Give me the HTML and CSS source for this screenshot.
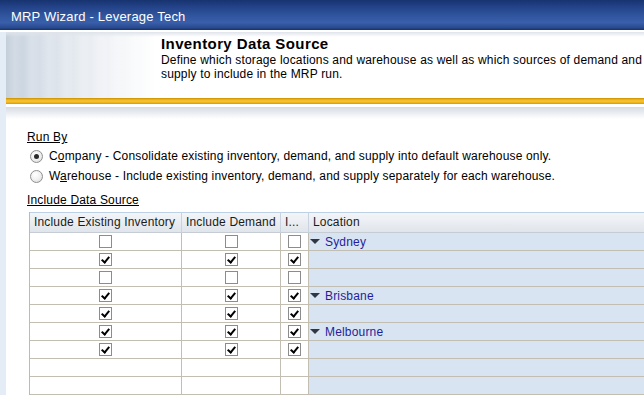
FILE: index.html
```html
<!DOCTYPE html>
<html lang="en">
<head>
    <meta charset="UTF-8" />
    <meta name="viewport" content="width=device-width,initial-scale=1.0" />
    <title>MRP Wizard - Leverage Tech</title>
    <link rel="stylesheet" href="styles.css">
</head>
<body>

    <div class="titlebar">MRP Wizard - Leverage Tech</div>

    <div class="frame">
        <div class="strip"></div>
        <div class="main">
            <div class="banner">
                <div class="banner-text">
                    <h1>Inventory Data Source</h1>
                    <p>Define which storage locations and warehouse as well as which sources of demand and<br>supply to include in the MRP run.</p>
                </div>
            </div>
            <div class="band"></div>
            <div class="shade"></div>

            <div class="content">
                <div class="label">Run By</div>
                <div class="radios">
                    <div class="radio-row">
                        <span class="radio checked"></span>
                        <span>C<u>o</u>mpany - Consolidate existing inventory, demand, and supply into default warehouse only.</span>
                    </div>
                    <div class="radio-row">
                        <span class="radio"></span>
                        <span>W<u>a</u>rehouse - Include existing inventory, demand, and supply separately for each warehouse.</span>
                    </div>
                </div>

                <div class="label second">Include Data Source</div>

                <div class="grid">
                    <div class="head">Include Existing Inventory</div>
                    <div class="head">Include Demand</div>
                    <div class="head">I...</div>
                    <div class="head">Location</div>

                    <div class="cell"><span class="chk"></span></div>
                    <div class="cell"><span class="chk"></span></div>
                    <div class="cell"><span class="chk"></span></div>
                    <div class="cell loc"><span class="arrow"></span>Sydney</div>

                    <div class="cell"><span class="chk on"></span></div>
                    <div class="cell"><span class="chk on"></span></div>
                    <div class="cell"><span class="chk on"></span></div>
                    <div class="cell loc"></div>

                    <div class="cell"><span class="chk"></span></div>
                    <div class="cell"><span class="chk"></span></div>
                    <div class="cell"><span class="chk"></span></div>
                    <div class="cell loc"></div>

                    <div class="cell"><span class="chk on"></span></div>
                    <div class="cell"><span class="chk on"></span></div>
                    <div class="cell"><span class="chk on"></span></div>
                    <div class="cell loc"><span class="arrow"></span>Brisbane</div>

                    <div class="cell"><span class="chk on"></span></div>
                    <div class="cell"><span class="chk on"></span></div>
                    <div class="cell"><span class="chk on"></span></div>
                    <div class="cell loc"></div>

                    <div class="cell"><span class="chk on"></span></div>
                    <div class="cell"><span class="chk on"></span></div>
                    <div class="cell"><span class="chk on"></span></div>
                    <div class="cell loc"><span class="arrow"></span>Melbourne</div>

                    <div class="cell"><span class="chk on"></span></div>
                    <div class="cell"><span class="chk on"></span></div>
                    <div class="cell"><span class="chk on"></span></div>
                    <div class="cell loc"></div>

                    <div class="cell"></div>
                    <div class="cell"></div>
                    <div class="cell"></div>
                    <div class="cell loc"></div>

                    <div class="cell"></div>
                    <div class="cell"></div>
                    <div class="cell"></div>
                    <div class="cell loc"></div>
                </div>
            </div>
        </div>
    </div>

</body>
</html>
```

FILE: styles.css
```css
body {
    margin: 0;
    width: 644px;
    height: 395px;
    overflow: hidden;
    background: #fff;
    font-family: "Liberation Sans", Arial, sans-serif;
    font-size: 12px;
    letter-spacing: 0.17px;
    color: #000;
}

.titlebar {
    height: 30px;
    box-sizing: border-box;
    padding: 3px 0 0 11px;
    line-height: 27px;
    font-size: 13px;
    letter-spacing: 0.2px;
    color: #fff;
    background: linear-gradient(#17336f 0, #24448a 25%, #3459a3 60%, #3a5faa 75%, #284a90 92%, #16326c 100%);
}

.frame {
    display: flex;
    height: 365px;
}

.strip {
    width: 6px;
    background: #e4ecf5;
    border-top: 2px solid #fff;
}

.main {
    flex: 1;
    border-top: 2px solid #fff;
    overflow: hidden;
}

.banner {
    height: 66px;
    box-sizing: border-box;
    padding: 3px 0 0 155px;
    background:
        linear-gradient(#dfe4eb 0, rgba(255,255,255,0) 5px),
        repeating-linear-gradient(90deg, rgba(255,255,255,0) 0, rgba(255,255,255,0.18) 9px, rgba(255,255,255,0) 17px),
        linear-gradient(90deg, #c4cfdc 0, #d9e0e9 40px, #eef1f5 95px, #fff 150px);
}

.banner h1 {
    margin: 0;
    font-size: 15px;
    letter-spacing: 0.4px;
    line-height: 18px;
    font-weight: bold;
}

.banner p {
    margin: 0;
    line-height: 14px;
    white-space: nowrap;
}

.band {
    height: 6px;
    background: linear-gradient(#c58d00 0, #e8aa10 20%, #f6c63c 50%, #eeb41c 75%, #d89b00 100%);
}

.shade {
    margin-top: 3px;
    height: 12px;
    background: linear-gradient(#d6dce4, #fff);
}

.content {
    padding: 11px 0 0 21px;
}

.label {
    line-height: 14px;
    text-decoration: underline;
}

.label.second {
    margin-top: 7px;
}

.radios {
    margin-top: 2px;
}

.radio-row {
    height: 20px;
    display: flex;
    align-items: center;
    gap: 6px;
    padding-left: 3px;
    white-space: nowrap;
}

.radio {
    width: 13px;
    height: 13px;
    box-sizing: border-box;
    border: 1px solid #8d8f91;
    border-radius: 50%;
    background: radial-gradient(circle at 40% 35%, #fff 0, #f0f0f0 50%, #d4d4d4 100%);
    display: flex;
    align-items: center;
    justify-content: center;
}

.radio.checked::after {
    content: "";
    width: 5px;
    height: 5px;
    border-radius: 50%;
    background: #2b2b2b;
}

.grid {
    margin-top: 5px;
    margin-left: 2px;
    display: grid;
    grid-template-columns: 152px 99px 28px 420px;
    border-left: 1px solid #a5bfdb;
    width: max-content;
}

.head {
    height: 21px;
    box-sizing: border-box;
    padding-left: 4px;
    line-height: 19px;
    white-space: nowrap;
    border-top: 1px solid #bcd0e6;
    border-right: 1px solid #c9d3df;
    border-bottom: 1px solid #c6ccd4;
    background: linear-gradient(#f3f5f8, #e0e5eb);
    color: #1b1b1b;
}

.cell {
    height: 18px;
    box-sizing: border-box;
    border-right: 1px solid #c2beb2;
    border-bottom: 1px solid #c2beb2;
    display: flex;
    align-items: center;
    justify-content: center;
    background: #fff;
}

.cell.loc {
    justify-content: flex-start;
    padding-left: 1px;
    gap: 5px;
    background: #d8e4f1;
    color: #1f1f9a;
    border-right: none;
}

.chk {
    width: 13px;
    height: 13px;
    box-sizing: border-box;
    border: 1px solid #8c8c8c;
    background: #fff;
    position: relative;
}

.chk.on::after {
    content: "";
    position: absolute;
    left: 3px;
    top: 1px;
    width: 3px;
    height: 6px;
    border-right: 2px solid #000;
    border-bottom: 2px solid #000;
    transform: rotate(40deg);
    transform-origin: center;
}

.arrow {
    width: 0;
    height: 0;
    border-left: 5px solid transparent;
    border-right: 5px solid transparent;
    border-top: 5px solid #2f3645;
}
```
